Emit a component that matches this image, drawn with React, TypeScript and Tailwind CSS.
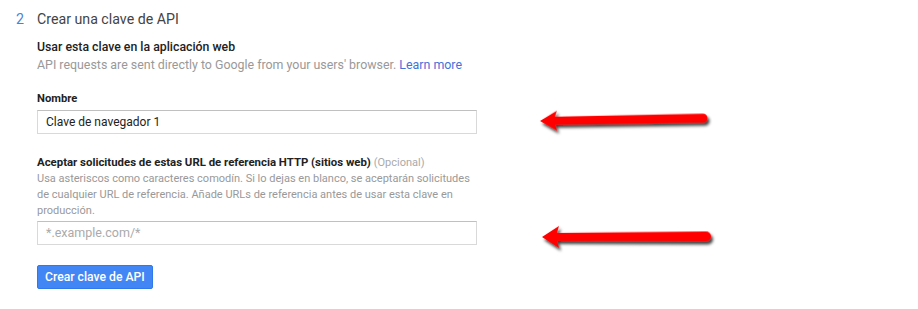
export default function App() {
  return (
    <div className="relative h-[309px] w-[918px] overflow-hidden bg-white font-['Roboto',sans-serif]">
      <div className="flex items-start pt-[9px]">
        <span className="w-[37px] pl-[16px] text-[14.2px] leading-[20px] text-[#4d7fd9]">2</span>
        <h2 className="text-[14.2px] leading-[20px] text-[#444]">Crear una clave de API</h2>
      </div>

      <div className="ml-[37px] mt-[9px] w-[440px]">
        <p className="text-[12.3px] font-medium leading-[18px] text-[#222]">
          Usar esta clave en la aplicación web
        </p>
        <p className="whitespace-nowrap text-[12.4px] leading-[18px] text-[#999]">
          API requests are sent directly to Google from your users' browser.{" "}
          <a className="text-[#4272db]">Learn more</a>
        </p>

        <label className="mt-[17px] block text-[11.2px] font-bold leading-[16px] text-[#222]">
          Nombre
        </label>
        <div className="mt-[3px] flex h-[24px] items-center border border-[#d9d9d9] border-t-[#c0c0c0] px-[8px] text-[12px] text-[#222]">
          Clave de navegador 1
        </div>

        <div className="mt-[20px] text-[11px] leading-[16px]">
          <p className="whitespace-nowrap text-[11.4px] font-bold text-[#222]">
            Aceptar solicitudes de estas URL de referencia HTTP (sitios web){" "}
            <span className="text-[11px] font-normal text-[#aaa]">(Opcional)</span>
          </p>
          <p className="text-[#999]">
            Usa asteriscos como caracteres comodín. Si lo dejas en blanco, se aceptarán solicitudes de
            cualquier URL de referencia. Añade URLs de referencia antes de usar esta clave en producción.
          </p>
        </div>
        <div className="mt-[2px] flex h-[24px] items-center border border-[#d9d9d9] border-t-[#c0c0c0] px-[8px] text-[12.5px] text-[#aaa]">
          *.example.com/*
        </div>

        <button className="mt-[20px] h-[24px] rounded-[2px] border border-[#3079ed] bg-[#4285f4] px-[7px] text-[12.2px] font-medium text-white">
          Crear clave de API
        </button>
      </div>

      <svg className="pointer-events-none absolute inset-0" width="918" height="309" viewBox="0 0 918 309">
        <defs>
          <filter id="shadow" x="-10%" y="-50%" width="120%" height="200%">
            <feDropShadow dx="2" dy="3" stdDeviation="1.5" floodColor="#000" floodOpacity="0.75" />
          </filter>
        </defs>
        <g transform="translate(540 121) rotate(-1)" filter="url(#shadow)">
          <path d="M0 0 L17 -10 L15 -4 L163 -4.5 A4.5 4.5 0 0 1 163 4.5 L15 4 L17 10 Z" fill="#ff0000" />
        </g>
        <g transform="translate(542 237) rotate(-0.2)" filter="url(#shadow)">
          <path d="M0 0 L17 -11 L15 -4 L164 -5 A5 5 0 0 1 164 5 L15 4 L17 11 Z" fill="#ff0000" />
        </g>
      </svg>
    </div>
  );
}
